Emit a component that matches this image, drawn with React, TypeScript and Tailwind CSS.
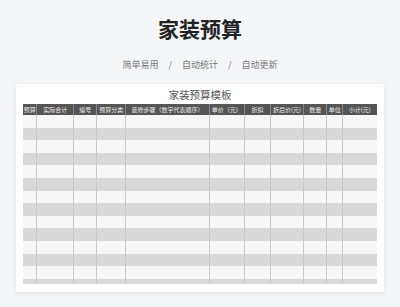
import React from "react";

const cols = "grid-cols-[13.4px_36.6px_23.4px_29px_83.3px_35.3px_26px_33px_23.4px_16px_34px]";
const headers = ["预算", "实际合计", "编号", "预算分类", "装修步骤（数字代表顺序）", "单价（元）", "折扣", "折后价(元)", "数量", "单位", "小计(元)"];

export default function App() {
  const rows = Array.from({ length: 14 }, (_, i) => i);
  return (
    <div className="w-[400px] h-[307px] bg-[#f4f5f7] overflow-hidden flex flex-col items-center" style={{ fontFamily: '"Noto Sans CJK SC", "Noto Sans", sans-serif' }}>
      <div className="mt-[14px] h-[28px] flex items-center text-[21px] font-bold text-[#222] leading-none">家装预算</div>
      <div className="mt-[16px] flex items-center text-[9px] text-[#777] leading-none h-[12px]">
        <span>简单易用</span>
        <span className="mx-[10px]">/</span>
        <span>自动统计</span>
        <span className="mx-[10px]">/</span>
        <span>自动更新</span>
      </div>
      <div className="mt-[14px] w-[368px] h-[208px] bg-white shadow-[0_1px_4px_rgba(0,0,0,0.08)] flex flex-col px-[7px] pb-[8px]">
        <div className="h-[20px] flex items-center justify-center text-[10.5px] text-[#555] leading-none pt-[2px]">家装预算模板</div>
        <div className="flex-1 overflow-hidden">
          <div className={`grid ${cols} h-[11px] bg-[#555555]`}>
            {headers.map((h, i) => (
              <div key={i} className={`flex items-center justify-center overflow-hidden whitespace-nowrap text-[6px] text-[#eee] leading-none ${i > 0 ? "border-l border-[#888]" : ""}`}>{h}</div>
            ))}
          </div>
          {rows.map((r) => (
            <div key={r} className={`grid ${cols} h-[12.6px] ${r % 2 === 0 ? "bg-[#f7f7f7]" : "bg-[#d9d9d9]"}`}>
              {headers.map((_, i) => (
                <div key={i} className={i > 0 ? "border-l border-[#c9c9c9]" : ""} />
              ))}
            </div>
          ))}
        </div>
      </div>
    </div>
  );
}
